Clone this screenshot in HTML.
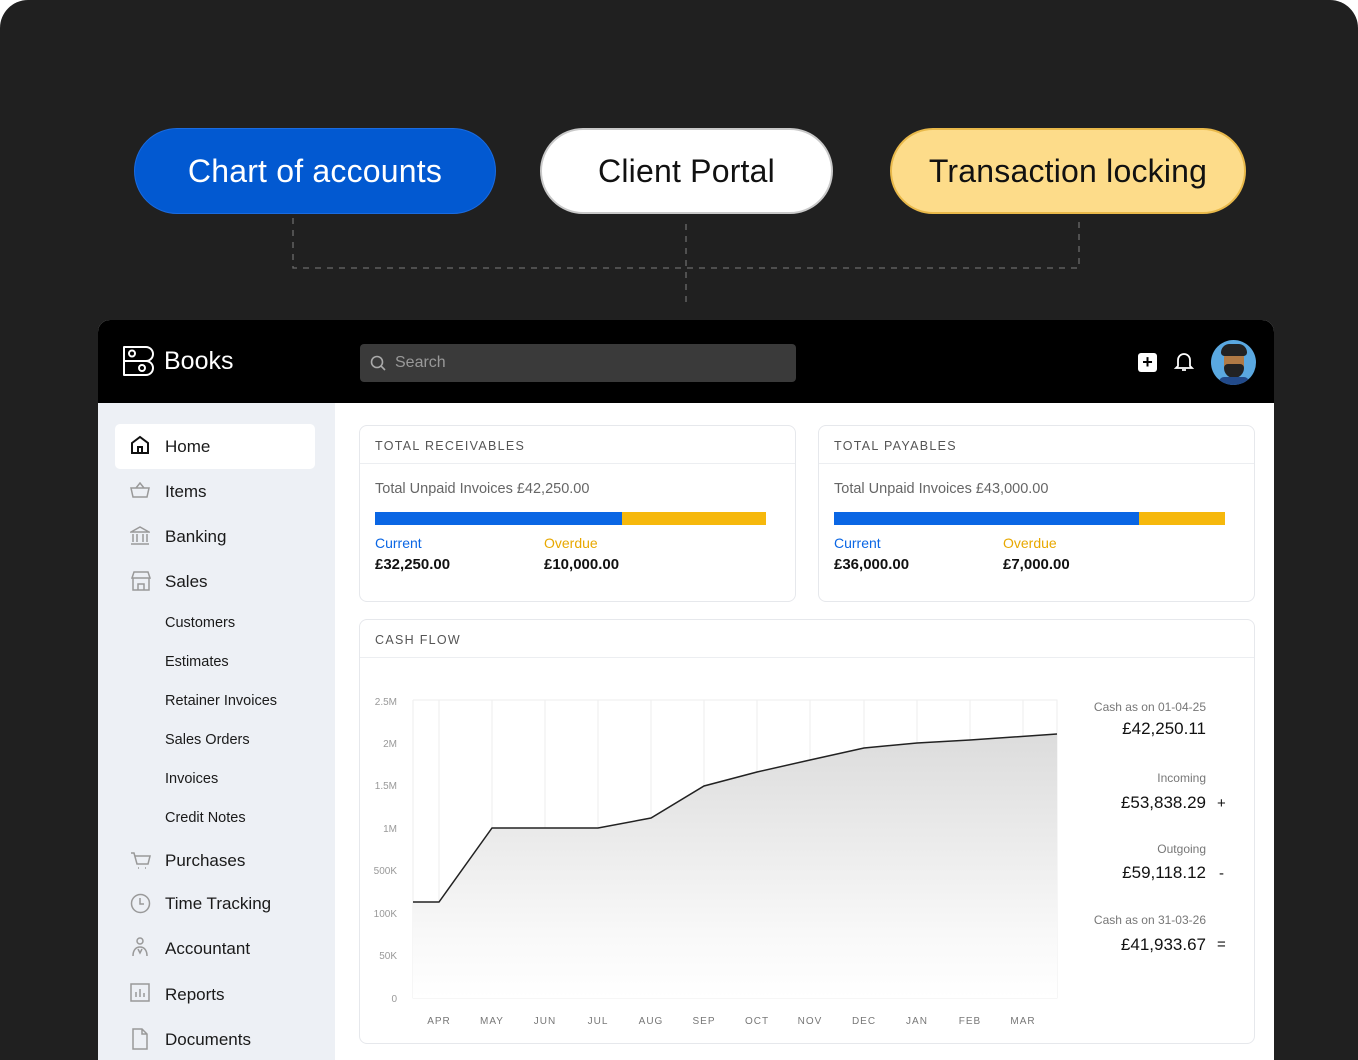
<!DOCTYPE html>
<html><head><meta charset="utf-8"><style>
*{box-sizing:border-box;margin:0;padding:0}
body{width:1358px;height:1060px;background:#fff;font-family:"Liberation Sans",sans-serif;overflow:hidden;position:relative}
.bg{position:absolute;left:0;top:0;width:1358px;height:1060px;background:#202020;border-radius:28px 28px 0 0}
.pill{position:absolute;top:128px;height:86px;border-radius:43px;display:flex;align-items:center;justify-content:center;font-size:32px;letter-spacing:.2px}
.abs{position:absolute}
.app{position:absolute;left:98px;top:320px;width:1176px;height:740px;background:#fff;border-radius:12px 12px 0 0;overflow:hidden}
.top{position:absolute;left:0;top:0;width:1176px;height:83px;background:#000}
.side{position:absolute;left:0;top:83px;width:237px;height:660px;background:#edf0f5}
.nav{position:absolute;left:67px;font-size:17px;color:#1a1a1a}
.sub{position:absolute;left:67px;font-size:14.5px;color:#1a1a1a}
.ic{position:absolute;left:32px}
.card{position:absolute;border:1px solid #e6e8ec;border-radius:8px;background:#fff}
.ch{height:38px;border-bottom:1px solid #eceef1;font-size:12.5px;letter-spacing:1.3px;color:#555;padding:13px 0 0 15px}
</style></head><body>
<div class="bg"></div>
<div class="pill" style="left:134px;width:362px;background:#0259d1;color:#fff;border:1px solid #1a6be0">Chart of accounts</div>
<div class="pill" style="left:540px;width:293px;background:#fff;color:#111;border:2px solid #c9c9c9">Client Portal</div>
<div class="pill" style="left:890px;width:356px;background:#fddc8a;color:#111;border:2px solid #e9b94a">Transaction locking</div>
<svg class="abs" style="left:0;top:0" width="1358" height="320"><g stroke="#6a6a6a" stroke-width="1.3" stroke-dasharray="6 6" fill="none"><path d="M293 218V268H1079V218"/><path d="M686 224V306"/></g></svg>
<div class="app">
<div class="top">
<svg class="abs" style="left:23px;top:24px" width="34" height="34" viewBox="0 0 34 34" fill="none" stroke="#fff" stroke-width="2"><path d="M3 3h22a7 7 0 0 1 0 14H3z M3 17h22a7 7 0 0 1 0 14H3z" stroke-linejoin="round"/><circle cx="11" cy="9.5" r="3"/><circle cx="21" cy="24" r="3"/></svg>
<div class="abs" style="left:66px;top:27px;color:#fff;font-size:25px">Books</div>
<div class="abs" style="left:262px;top:24px;width:436px;height:38px;background:#3a3a3a;border-radius:4px"></div>
<svg class="abs" style="left:272px;top:35px" width="16" height="16" fill="none" stroke="#aaa" stroke-width="1.6"><circle cx="7" cy="7" r="5.5"/><path d="M11 11l4 4"/></svg>
<div class="abs" style="left:297px;top:34px;color:#999;font-size:16px">Search</div>
<div class="abs" style="left:1040px;top:33px;width:19px;height:19px;background:#fff;border-radius:3px;color:#000;font-size:18px;font-weight:bold;line-height:19px;text-align:center">+</div>
<svg class="abs" style="left:1075px;top:31px" width="22" height="22" fill="none" stroke="#fff" stroke-width="1.8"><path d="M5 15V9a6 6 0 0 1 12 0v6l2 2H3z M9 19h4"/></svg>
<div class="abs" style="left:1113px;top:20px;width:45px;height:45px;border-radius:50%;background:#5aa8e0;overflow:hidden"><div style="position:absolute;left:13px;top:10px;width:20px;height:24px;background:#b07a45;border-radius:8px"></div><div style="position:absolute;left:10px;top:4px;width:26px;height:12px;background:#222;border-radius:10px 10px 4px 4px"></div><div style="position:absolute;left:13px;top:24px;width:20px;height:14px;background:#222;border-radius:4px 4px 10px 10px"></div><div style="position:absolute;left:8px;top:37px;width:30px;height:10px;background:#224a8a;border-radius:8px"></div></div>
</div>
<div class="side">
<div class="abs" style="left:17px;top:21px;width:200px;height:45px;background:#fff;border-radius:5px"></div>
<svg class="ic" style="top:32px" width="20" height="20" fill="none" stroke="#111" stroke-width="2"><path d="M2 8l8-6 8 6v10H2z M8 18v-6h4v6"/></svg>
<div class="nav" style="top:34px">Home</div>
<svg class="ic" style="top:79px" width="20" height="18" fill="none" stroke="#999" stroke-width="1.5"><path d="M1 6h18l-2 9H3z M6 6l4-5 4 5"/></svg>
<div class="nav" style="top:79px">Items</div>
<svg class="ic" style="top:122px" width="20" height="20" fill="none" stroke="#999" stroke-width="1.5"><path d="M1 7l9-5 9 5z M3 9v8M7 9v8M13 9v8M17 9v8M1 19h18"/></svg>
<div class="nav" style="top:124px">Banking</div>
<svg class="ic" style="top:168px" width="22" height="20" fill="none" stroke="#999" stroke-width="1.5"><path d="M2 7l2-6h14l2 6z M3 7v12h16V7 M8 19v-6h6v6"/></svg>
<div class="nav" style="top:169px">Sales</div>
<div class="sub" style="top:212px">Customers</div>
<div class="sub" style="top:251px">Estimates</div>
<div class="sub" style="top:290px">Retainer Invoices</div>
<div class="sub" style="top:329px">Sales Orders</div>
<div class="sub" style="top:368px">Invoices</div>
<div class="sub" style="top:407px">Credit Notes</div>
<svg class="ic" style="top:448px" width="22" height="20" fill="none" stroke="#999" stroke-width="1.5"><path d="M1 2h3l3 11h11l2-8H5 M8 17h1M15 17h1"/></svg>
<div class="nav" style="top:448px">Purchases</div>
<svg class="ic" style="top:490px" width="21" height="21" fill="none" stroke="#999" stroke-width="1.5"><circle cx="10.5" cy="10.5" r="9"/><path d="M10 5v6h4"/></svg>
<div class="nav" style="top:491px">Time Tracking</div>
<svg class="ic" style="top:534px" width="20" height="20" fill="none" stroke="#999" stroke-width="1.5"><circle cx="10" cy="4" r="3"/><path d="M3 19c0-6 3-9 7-9s7 3 7 9 M8 12l2 4 2-4"/></svg>
<div class="nav" style="top:536px">Accountant</div>
<svg class="ic" style="top:580px" width="20" height="20" fill="none" stroke="#999" stroke-width="1.5"><rect x="1" y="1" width="18" height="17"/><path d="M6 14V9M10 14V6M14 14v-4"/></svg>
<div class="nav" style="top:582px">Reports</div>
<svg class="ic" style="top:625px" width="20" height="22" fill="none" stroke="#999" stroke-width="1.5"><path d="M3 1h9l5 5v15H3z M12 1v5h5"/></svg>
<div class="nav" style="top:627px">Documents</div>
</div>
<div class="card" style="left:261px;top:105px;width:437px;height:177px">
<div class="ch">TOTAL RECEIVABLES</div>
<div class="abs" style="left:15px;top:55px;font-size:14.5px;color:#666">Total Unpaid Invoices £42,250.00</div>
<div class="abs" style="left:15px;top:86px;width:247px;height:13px;background:#0a66e4"></div>
<div class="abs" style="left:262px;top:86px;width:144px;height:13px;background:#f6b80c"></div>
<div class="abs" style="left:15px;top:109px;font-size:14px;color:#0a66e4">Current</div>
<div class="abs" style="left:15px;top:130px;font-size:15px;color:#111;font-weight:bold">£32,250.00</div>
<div class="abs" style="left:184px;top:109px;font-size:14px;color:#e8a800">Overdue</div>
<div class="abs" style="left:184px;top:130px;font-size:15px;color:#111;font-weight:bold">£10,000.00</div>
</div>
<div class="card" style="left:720px;top:105px;width:437px;height:177px">
<div class="ch">TOTAL PAYABLES</div>
<div class="abs" style="left:15px;top:55px;font-size:14.5px;color:#666">Total Unpaid Invoices £43,000.00</div>
<div class="abs" style="left:15px;top:86px;width:305px;height:13px;background:#0a66e4"></div>
<div class="abs" style="left:320px;top:86px;width:86px;height:13px;background:#f6b80c"></div>
<div class="abs" style="left:15px;top:109px;font-size:14px;color:#0a66e4">Current</div>
<div class="abs" style="left:15px;top:130px;font-size:15px;color:#111;font-weight:bold">£36,000.00</div>
<div class="abs" style="left:184px;top:109px;font-size:14px;color:#e8a800">Overdue</div>
<div class="abs" style="left:184px;top:130px;font-size:15px;color:#111;font-weight:bold">£7,000.00</div>
</div>
<div class="card" style="left:261px;top:299px;width:896px;height:425px">
<div class="ch">CASH FLOW</div>
</div>
</div>
<svg class="abs" style="left:0;top:0" width="1358" height="1060">
<defs><linearGradient id="g" x1="0" y1="0" x2="0" y2="1"><stop offset="0" stop-color="#dcdcdc"/><stop offset=".75" stop-color="#f8f8f8"/><stop offset="1" stop-color="#fff"/></linearGradient></defs>
<g stroke="#eeeeee" stroke-width="1" fill="none"><path d="M413 700V998H1057V700H413"/>
<path d="M439 700V998M492 700V998M545 700V998M598 700V998M651 700V998M704 700V998M757 700V998M810 700V998M864 700V998M917 700V998M970 700V998M1023 700V998"/></g>
<path d="M413 902L439 902L492 828L598 828L651 818L704 786L757 772L810 760L864 748L917 743L970 740L1057 734V998H413Z" fill="url(#g)"/>
<path d="M413 902L439 902L492 828L598 828L651 818L704 786L757 772L810 760L864 748L917 743L970 740L1057 734" fill="none" stroke="#222" stroke-width="1.5"/>
<g text-anchor="end" font-family="Liberation Sans" font-size="10" fill="#999">
<text x="397" y="705">2.5M</text><text x="397" y="747">2M</text><text x="397" y="789">1.5M</text><text x="397" y="832">1M</text><text x="397" y="874">500K</text><text x="397" y="917">100K</text><text x="397" y="959">50K</text><text x="397" y="1002">0</text></g>
<g text-anchor="middle" font-family="Liberation Sans" font-size="10" fill="#777" letter-spacing="1"><text x="439" y="1024">APR</text><text x="492" y="1024">MAY</text><text x="545" y="1024">JUN</text><text x="598" y="1024">JUL</text><text x="651" y="1024">AUG</text><text x="704" y="1024">SEP</text><text x="757" y="1024">OCT</text><text x="810" y="1024">NOV</text><text x="864" y="1024">DEC</text><text x="917" y="1024">JAN</text><text x="970" y="1024">FEB</text><text x="1023" y="1024">MAR</text></g>
<g font-family="Liberation Sans" text-anchor="end"><text x="1206" y="711" font-size="12" fill="#777">Cash as on 01-04-25</text><text x="1206" y="734" font-size="17" fill="#111">£42,250.11</text>
<text x="1206" y="782" font-size="12" fill="#777">Incoming</text><text x="1206" y="808" font-size="17" fill="#111">£53,838.29</text>
<text x="1206" y="853" font-size="12" fill="#777">Outgoing</text><text x="1206" y="878" font-size="17" fill="#111">£59,118.12</text>
<text x="1206" y="924" font-size="12" fill="#777">Cash as on 31-03-26</text><text x="1206" y="950" font-size="17" fill="#111">£41,933.67</text></g>
<g font-family="Liberation Sans" font-size="15" fill="#111"><text x="1217" y="808">+</text><text x="1219" y="878">-</text><text x="1217" y="949">=</text></g>
</svg>
</body></html>
